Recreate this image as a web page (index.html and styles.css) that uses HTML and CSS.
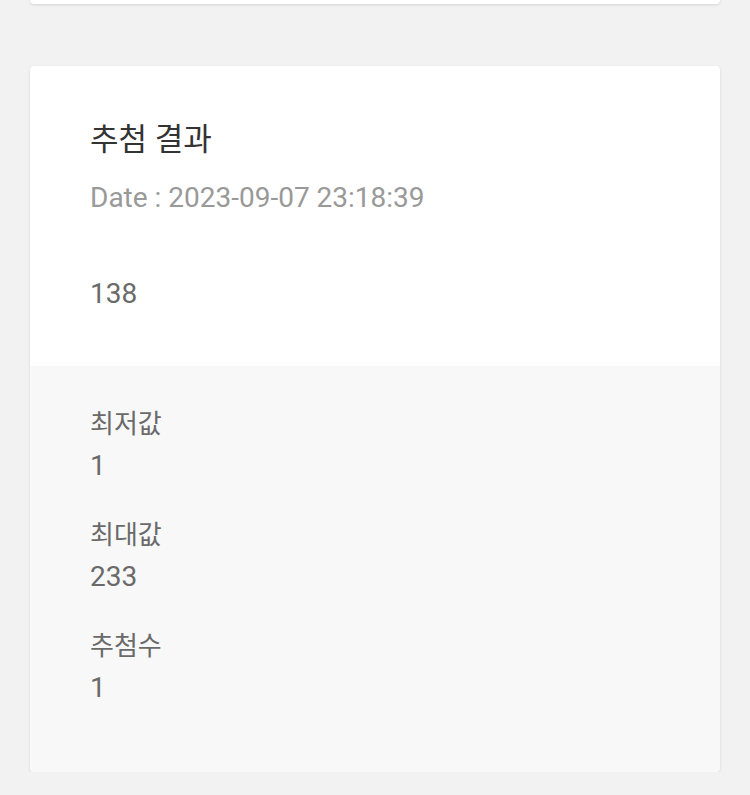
FILE: index.html
```html
<!DOCTYPE html>
<html lang="ko">
<head>
<meta charset="utf-8">
<link rel="stylesheet" href="styles.css">
</head>
<body>
<div class="page">
  <div class="card card-prev"></div>
  <div class="card card-result">
    <div class="result-head">
      <div class="title">추첨 결과</div>
      <div class="date">Date : 2023-09-07 23:18:39</div>
      <div class="numbers">138</div>
    </div>
    <div class="result-info">
      <div class="info-item">
        <div class="info-label">최저값</div>
        <div class="info-value">1</div>
      </div>
      <div class="info-item">
        <div class="info-label">최대값</div>
        <div class="info-value">233</div>
      </div>
      <div class="info-item">
        <div class="info-label">추첨수</div>
        <div class="info-value">1</div>
      </div>
    </div>
  </div>
</div>
</body>
</html>
```

FILE: styles.css
```css
html, body {
  margin: 0;
  padding: 0;
  background: #f2f2f2;
  font-family: Roboto, "Noto Sans CJK KR", "Noto Sans", sans-serif;
}
.page {
  padding: 0 30px;
  display: flex;
  flex-direction: column;
  gap: 62px;
}
.card {
  background: #fff;
  border-radius: 4px;
  box-shadow: 0 1px 3px rgba(0, 0, 0, 0.12);
  overflow: hidden;
}
.card-prev {
  height: 24px;
  margin-top: -20px;
}
.result-head {
  padding: 50px 60px 52px;
}
.title {
  font-size: 31px;
  line-height: 48px;
  color: #333;
}
.date {
  margin-top: 14px;
  font-size: 28px;
  line-height: 40px;
  color: #999;
}
.numbers {
  margin-top: 56px;
  font-size: 28px;
  line-height: 40px;
  color: #6a6a6a;
}
.result-info {
  background: #f8f8f8;
  padding: 37px 60px 63px;
  display: flex;
  flex-direction: column;
  gap: 27px;
}
.info-label, .info-value {
  font-size: 28px;
  line-height: 42px;
  color: #6a6a6a;
}
.info-label {
  font-size: 26px;
}
```
